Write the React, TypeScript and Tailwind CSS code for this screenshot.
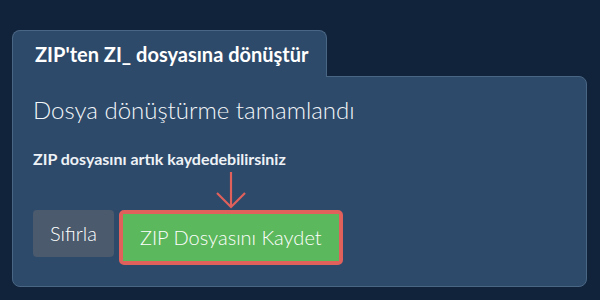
import React from 'react';

function DownArrow() {
  return (
    <svg width="32" height="38" viewBox="0 0 32 38" fill="none" className="block">
      <path d="M16 1 L16 36" stroke="#e0605c" strokeWidth="2.2" />
      <path d="M2 22 L16 36 L30 22" stroke="#e0605c" strokeWidth="2.2" />
    </svg>
  );
}

export default function App() {
  return (
    <div
      className="w-[600px] h-[300px] bg-[#11233a] pt-[30px] px-3 overflow-hidden"
      style={{ fontFamily: 'Lato, "Noto Sans", sans-serif' }}
    >
      <div className="flex flex-col items-start">
        {/* Tab */}
        <div className="relative z-10 -mb-px w-[315px] h-[47px] pl-[22px] flex items-center bg-[#2d4a6a] border border-b-0 border-[#4a6685] rounded-t-lg">
          <span className="text-[20px] font-bold text-white leading-none">
            ZIP'ten ZI_ dosyasına dönüştür
          </span>
        </div>

        {/* Panel */}
        <div className="w-[575px] h-[211px] bg-[#2d4a6a] border border-[#4a6685] rounded-lg rounded-tl-none px-5 pt-[19px]">
          <h2 className="text-[24px] font-light text-[#f3f6f9] leading-[1.2]">
            Dosya dönüştürme tamamlandı
          </h2>
          <p className="mt-[24px] text-[16px] font-bold text-[#eef2f6] leading-[1.2]">
            ZIP dosyasını artık kaydedebilirsiniz
          </p>

          <div className="mt-[42px] flex items-start gap-[5px]">
            <button className="h-[47px] px-[17px] rounded-[4px] bg-[#4b5a6d] text-white text-[20px] font-light">
              Sıfırla
            </button>
            <div className="relative border-4 border-[#e0605c] rounded-[5px]">
              <div className="absolute left-1/2 -translate-x-1/2 bottom-[calc(100%+5px)]">
                <DownArrow />
              </div>
              <button className="h-[47px] px-[17px] bg-[#5cb85c] text-white text-[20px] font-light">
                ZIP Dosyasını Kaydet
              </button>
            </div>
          </div>
        </div>
      </div>
    </div>
  );
}
